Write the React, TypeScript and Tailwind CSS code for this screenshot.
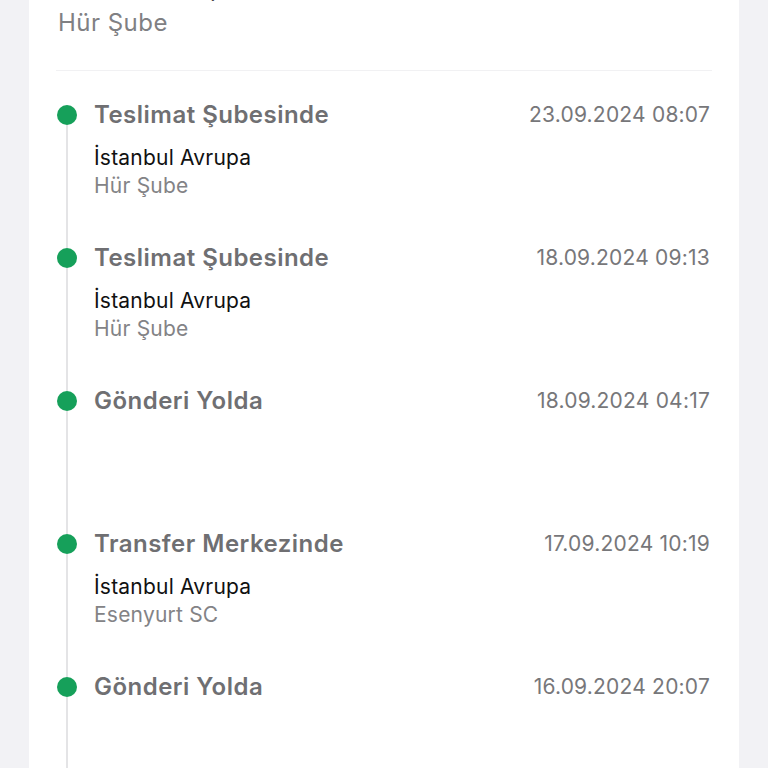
import React from 'react'

type Step = {
  title: string
  date: string
  city?: string
  branch?: string
}

const steps: Step[] = [
  { title: 'Teslimat Şubesinde', date: '23.09.2024 08:07', city: 'İstanbul Avrupa', branch: 'Hür Şube' },
  { title: 'Teslimat Şubesinde', date: '18.09.2024 09:13', city: 'İstanbul Avrupa', branch: 'Hür Şube' },
  { title: 'Gönderi Yolda', date: '18.09.2024 04:17' },
  { title: 'Transfer Merkezinde', date: '17.09.2024 10:19', city: 'İstanbul Avrupa', branch: 'Esenyurt SC' },
  { title: 'Gönderi Yolda', date: '16.09.2024 20:07' },
]

function TimelineItem({ step, first }: { step: Step; first: boolean }) {
  return (
    <div className="flex h-[143px]">
      {/* rail */}
      <div className="flex w-[22px] shrink-0 flex-col items-center">
        <div className={first ? 'h-[5px] w-[2px]' : 'h-[5px] w-[2px] bg-[#e4e4e6]'} />
        <div className="h-5 w-5 shrink-0 rounded-full bg-[#16a05a]" />
        <div className="w-[2px] flex-1 bg-[#e4e4e6]" />
      </div>

      <div className="ml-4 flex-1 pr-[2px]">
        <div className="flex items-center justify-between leading-[30px]">
          <span className="text-[24px] font-semibold tracking-[0.02em] text-[#6f6f72]">{step.title}</span>
          <span className="text-[21px] tracking-[0.01em] text-[#77777a]">{step.date}</span>
        </div>
        {step.city && (
          <div className="mt-[14px] text-[21px] leading-[28px] tracking-[0.01em]">
            <div className="text-[#111111]">{step.city}</div>
            <div className="text-[#838386]">{step.branch}</div>
          </div>
        )}
      </div>
    </div>
  )
}

export default function App() {
  return (
    <div className="h-[768px] overflow-hidden bg-[#f2f2f5] font-['Inter',sans-serif]">
      <div className="ml-[29px] w-[710px] bg-white px-[27px]">
        {/* previous step, scrolled mostly out of view */}
        <div className="-mt-[27px] pb-[32px] text-[24px] leading-[30px] tracking-[0.02em]">
          <div className="text-[#111111]">İstanbul Avrupa</div>
          <div className="ml-[2px] mt-[5px] text-[#808083]">Hür Şube</div>
        </div>
        <div className="h-[1px] bg-[#f1f1f3]" />

        <div className="pt-[29px]">
          {steps.map((step, i) => (
            <TimelineItem key={i} step={step} first={i === 0} />
          ))}
        </div>
      </div>
    </div>
  )
}
